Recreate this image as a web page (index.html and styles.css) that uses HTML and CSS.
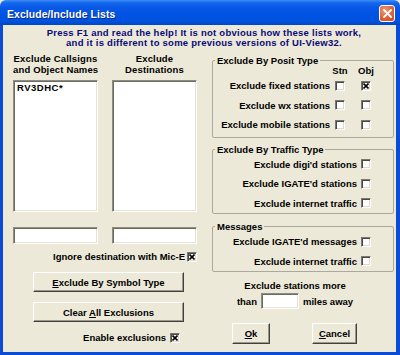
FILE: index.html
```
<!DOCTYPE html>
<html>
<head>
<meta charset="utf-8">
<link rel="stylesheet" href="styles.css">
</head>
<body>
<div class="window">
  <div class="titlebar">
    <span class="title">Exclude/Include Lists</span>
    <span class="close"><svg width="9" height="9" viewBox="0 0 9 9"><path d="M1 1L8 8M8 1L1 8" stroke="#fff" stroke-width="1.8" stroke-linecap="square"/></svg></span>
  </div>
  <div class="frame">
    <div class="notice">Press F1 and read the help! It is not obvious how these lists work,<br>and it is different to some previous versions of UI-View32.</div>
    <div class="main">
      <div class="left">
        <div class="lists">
          <div class="listcol">
            <div class="collabel">Exclude Callsigns<br>and Object Names</div>
            <div class="listbox"><div class="item">RV3DHC*</div></div>
            <div class="textbox"></div>
          </div>
          <div class="listcol">
            <div class="collabel">Exclude<br>Destinations</div>
            <div class="listbox"></div>
            <div class="textbox"></div>
          </div>
        </div>
        <div class="checkrow ignore">Ignore destination with Mic-E <span class="cb checked"><svg width="6" height="6" viewBox="0 0 6 6"><path d="M0.5 0.5L5.5 5.5M5.5 0.5L0.5 5.5" stroke="#000" stroke-width="1.6"/></svg></span></div>
        <div class="btn wide first"><span><u>E</u>xclude By Symbol Type</span></div>
        <div class="btn wide second"><span>Clear <u>A</u>ll Exclusions</span></div>
        <div class="checkrow enable">Enable exclusions <span class="cb checked"><svg width="6" height="6" viewBox="0 0 6 6"><path d="M0.5 0.5L5.5 5.5M5.5 0.5L0.5 5.5" stroke="#000" stroke-width="1.6"/></svg></span></div>
      </div>
      <div class="right">
        <fieldset class="group posit">
          <legend>Exclude By Posit Type</legend>
          <div class="prow head"><span class="cbcol"><span>Stn</span></span><span class="cbcol obj"><span>Obj</span></span></div>
          <div class="prow">Exclude fixed stations <span class="cb"></span><span class="cb obj checked"><svg width="6" height="6" viewBox="0 0 6 6"><path d="M0.5 0.5L5.5 5.5M5.5 0.5L0.5 5.5" stroke="#000" stroke-width="1.6"/></svg></span></div>
          <div class="prow">Exclude wx stations <span class="cb"></span><span class="cb obj"></span></div>
          <div class="prow">Exclude mobile stations <span class="cb"></span><span class="cb obj"></span></div>
        </fieldset>
        <fieldset class="group traffic">
          <legend>Exclude By Traffic Type</legend>
          <div class="trow">Exclude digi'd stations <span class="cb"></span></div>
          <div class="trow">Exclude IGATE'd stations <span class="cb"></span></div>
          <div class="trow">Exclude internet traffic <span class="cb"></span></div>
        </fieldset>
        <fieldset class="group messages">
          <legend>Messages</legend>
          <div class="trow">Exclude IGATE'd messages <span class="cb"></span></div>
          <div class="trow">Exclude internet traffic <span class="cb"></span></div>
        </fieldset>
        <div class="distance">
          <div class="distline">Exclude stations more</div>
          <div class="distrow">than <span class="milebox"></span> miles away</div>
        </div>
        <div class="okrow">
          <div class="btn ok"><span><u>O</u>k</span></div>
          <div class="btn cancel"><span><u>C</u>ancel</span></div>
        </div>
      </div>
    </div>
  </div>
</div>
</body>
</html>
```
FILE: styles.css
```
* { box-sizing: border-box; }
html, body { margin: 0; padding: 0; background: #ECE9D8; }
body { width: 400px; height: 355px; overflow: hidden; font-family: "Liberation Sans", Arial, sans-serif; font-weight: bold; font-size: 9.5px; color: #000; }

.window { width: 400px; height: 355px; display: flex; flex-direction: column; }

.titlebar {
  height: 25px; flex: none; display: flex; align-items: center; justify-content: space-between;
  padding: 0 5px 0 7px;
  background: linear-gradient(#3D8DF5 0px, #1466EE 3px, #0858E6 8px, #0054E3 14px, #0052DE 21px, #0046C6 25px);
  border-radius: 6px 6px 0 0;
}
.title { color: #fff; font-size: 10.4px; font-weight: bold; letter-spacing: 0.1px; margin-top: 3px; text-shadow: 1px 1px 0 #0A2C8A; }
.close {
  width: 16px; height: 17px; margin-top: 1px; display: flex; align-items: center; justify-content: center;
  border: 1px solid #fff; border-radius: 3px;
  background: radial-gradient(circle at 35% 30%, #F09A76 0%, #E06B42 45%, #C9461E 100%);
}

.frame {
  flex: 1; display: flex; flex-direction: column;
  border-left: 3px solid #0A4CD8; border-right: 4px solid #0A4CD8; border-bottom: 3px solid #0A4CD8;
  background: #ECE9D8;
}

.notice { margin-top: 3px; padding-left: 9px; text-align: center; color: #0A0A78; line-height: 10px; letter-spacing: 0.25px; }

.main { display: flex; padding-left: 10px; }
.left { width: 184px; padding-top: 5px; display: flex; flex-direction: column; }
.right { width: 182px; margin-left: 15px; padding-top: 7px; display: flex; flex-direction: column; }

.lists { display: flex; gap: 14px; }
.listcol { width: 85px; display: flex; flex-direction: column; }
.collabel { text-align: center; line-height: 11px; white-space: nowrap; letter-spacing: 0.15px; }
.listbox, .textbox, .milebox {
  background: #fff; border: 1px solid; border-color: #8E8C80 #fff #fff #8E8C80;
  box-shadow: inset 1px 1px 0 #6E6C62, inset -1px -1px 0 #E4E2D6;
}
.listbox { margin-top: 5px; height: 132px; padding: 2px 3px; }
.item { line-height: 10px; letter-spacing: 0.5px; }
.textbox { margin-top: 15px; height: 17px; }

.checkrow { display: flex; align-items: center; justify-content: flex-end; height: 10px; line-height: 10px; white-space: nowrap; }
.checkrow .cb { margin-left: 2px; }
.ignore { margin-top: 8px; }
.enable { margin-top: 11px; padding-right: 17px; }
.enable .cb { margin-left: 4px; }

.cb {
  width: 10px; height: 10px; flex: none; display: inline-flex; align-items: center; justify-content: center;
  background: #fff; border: 1px solid; border-color: #7A786E #fff #fff #7A786E;
  box-shadow: inset 1px 1px 0 #4A4943, inset -1px -1px 0 #DCDACE;
}

.btn {
  height: 20px; display: flex; align-items: center; justify-content: center; white-space: nowrap;
  background: #ECE9D8; border: 1px solid; border-color: #fff #404040 #404040 #fff;
  box-shadow: inset -1px -1px 0 #9A988C;
}
.btn u { text-decoration: underline; text-underline-offset: 1px; }
.wide { width: 151px; margin-left: 20px; }
.first { margin-top: 10px; }
.second { margin-top: 10px; }

.group { margin: 0; padding: 0 22px 0 0; border: 1px solid #ABA99C; border-radius: 2px; min-width: 0; }
.group legend { padding: 0 2px; margin-left: 2px; line-height: 11px; white-space: nowrap; }

.prow { display: flex; align-items: center; justify-content: flex-end; height: 19.5px; white-space: nowrap; }
.prow .cb { margin-left: 5px; }
.prow .cb.obj { margin-left: 16px; }
.prow.head { height: 10px; line-height: 10px; }
.cbcol { width: 10px; margin-left: 5px; display: flex; justify-content: center; }
.cbcol.obj { margin-left: 16px; }
.cbcol span { white-space: nowrap; }
.posit { padding-bottom: 2px; }

.trow { display: flex; align-items: center; justify-content: flex-end; height: 19.5px; white-space: nowrap; }
.trow .cb { margin-left: 4px; }
.traffic { margin-top: 6px; }
.messages { margin-top: 7px; }

.distance { margin-top: 9px; padding-right: 16px; display: flex; flex-direction: column; align-items: center; }
.distline { line-height: 10px; }
.distrow { margin-top: 2px; display: flex; align-items: center; height: 16px; white-space: nowrap; }
.milebox { width: 38px; height: 16px; margin: 0 4px; }

.okrow { margin-top: 14px; display: flex; padding-left: 20px; }
.ok { width: 38px; height: 21px; }
.cancel { width: 45px; height: 21px; margin-left: 42px; }
```
